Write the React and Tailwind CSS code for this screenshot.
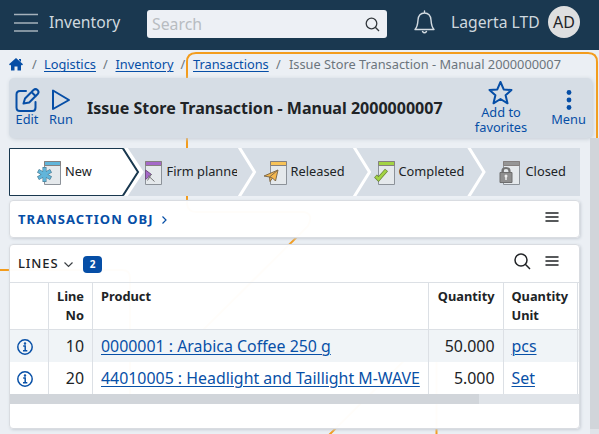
import React from 'react';

function PageBackdrop() {
  return (
    <svg className="pointer-events-none absolute inset-0" width="599" height="434" fill="none" stroke="#f39c1c" strokeWidth="2">
      <path d="M187 196V62Q187 53 196 53H588Q597 53 597 62V142" />
      <path d="M187 196V204Q188 212 196 212H304Q314 214 308 226L200 333" />
      <path d="M0 270H122Q130 270 130 278V400" />
      <path d="M326 438L427 338Q436 334 436.500 344V434" />
    </svg>
  );
}

function TopBar() {
  return (
    <header className="relative flex h-[50px] shrink-0 items-center bg-[#1a3850] text-[#cfd8df]">
      <svg className="mb-[5px] ml-[14px] shrink-0" width="24" height="20" stroke="#a5b1bb" strokeWidth="1.500">
        <path d="M0 1.500H24M0 10H24M0 18H24" />
      </svg>
      <span className="ml-[11px] w-[98px] pb-[6px] text-[15.700px] leading-6">Inventory</span>
      <div className="mb-[2px] flex h-7 w-[240px] items-center justify-between rounded-[3px] bg-[#edf0f5] pl-[5px] pr-[7px]">
        <span className="pt-px text-[15.800px] text-[#b8bcc1]">Search</span>
        <svg width="15" height="15" fill="none" stroke="#33383d" strokeWidth="1.300">
          <circle cx="6.500" cy="6.500" r="5.300" />
          <path d="M10.300 10.300L14 14" />
        </svg>
      </div>
      <svg className="mb-[6px] ml-[27px] shrink-0" width="21" height="24" fill="none" stroke="#d3dbe1" strokeWidth="1.400" strokeLinejoin="round" strokeLinecap="round">
        <path d="M10.500 1V3M1 19.500H20C17.500 17 17.300 14 17 10C16.600 5.500 14 3 10.500 3C7 3 4.400 5.500 4 10C3.700 14 3.500 17 1 19.500Z" />
        <path d="M8.500 21.500Q10.500 24 12.500 21.500" />
      </svg>
      <span className="ml-[16px] w-[97px] whitespace-nowrap pb-[6px] text-[15.700px] leading-6">Lagerta LTD</span>
      <span className="mb-[6px] flex size-8 items-center justify-center rounded-full bg-[#dedfe0] text-[16px] text-[#1f2428]">AD</span>
    </header>
  );
}

function Breadcrumb() {
  return (
    <nav className="relative flex h-7 shrink-0 items-center whitespace-nowrap pl-[9px] pt-[2px] text-[12.800px] text-[#6c757d]">
      <svg className="mb-px" width="14" height="13" fill="#064ea6">
        <path d="M7 0L14 6.300L12.900 7.500L12 6.700V12.500H8.500V8.500H5.500V12.500H2V6.700L1.100 7.500L0 6.300ZM10 1H12V4L10 2Z" />
      </svg>
      <span className="ml-[9px] w-[12px]">/</span>
      <a className="w-[51px] text-[#064ea6] underline decoration-1 underline-offset-2">Logistics</a>
      <span className="ml-[8px] w-[12.500px]">/</span>
      <a className="w-[57px] text-[#064ea6] underline decoration-1 underline-offset-2">Inventory</a>
      <span className="ml-[8px] w-[12.500px]">/</span>
      <a className="w-[76px] text-[#064ea6] underline decoration-1 underline-offset-2">Transactions</a>
      <span className="ml-[7px] w-[13px]">/</span>
      <span>Issue Store Transaction - Manual 2000000007</span>
    </nav>
  );
}

function Toolbar() {
  return (
    <section className="relative ml-[9px] flex h-[60px] w-[583px] shrink-0 rounded-[5px] bg-[#d6dde5] text-[12.800px] leading-[15px] text-[#064ea6] shadow-[1px_1px_4px_#c5cdd5]">
      <div className="flex w-9 flex-col items-center pt-[10px]">
        <svg width="25" height="24" fill="none" stroke="#064ea6" strokeWidth="2" strokeLinejoin="round" strokeLinecap="round">
          <path d="M11 3H5Q1.500 3 1.500 6.500V19.500Q1.500 23 5 23H17.500Q20.500 23 20.500 19.500V14" />
          <path d="M8.500 15.500L10 10.500L18.500 2Q20.500 .3 22.500 2Q24.500 4 22.700 6L14.200 14.500ZM16.500 4L20.700 8.200" />
        </svg>
        <span>Edit</span>
      </div>
      <div className="flex w-[32px] flex-col items-center pt-[10px]">
        <svg width="20" height="24" fill="none" stroke="#064ea6" strokeWidth="2" strokeLinejoin="round">
          <path d="M2 2.500V21L18 12Z" />
        </svg>
        <span>Run</span>
      </div>
      <h1 className="ml-[10px] flex w-[372px] items-center whitespace-nowrap text-[16.050px] font-bold text-[#202326]">Issue Store Transaction - Manual 2000000007</h1>
      <div className="ml-[14px] flex w-[56px] flex-col items-center pt-[3px] text-center">
        <svg className="mr-[2px]" width="25" height="24" fill="none" stroke="#064ea6" strokeWidth="2" strokeLinejoin="round">
          <path d="M12.500 1L15.700 8.400L23.500 9L17.600 14.200L19.500 22.300L12.500 18L5.500 22.300L7.400 14.200L1.500 9L9.300 8.400Z" />
        </svg>
        <span>Add to<br />favorites</span>
      </div>
      <div className="ml-[20px] flex w-[39px] flex-col items-center pt-[12px]">
        <svg width="6" height="20" fill="#064ea6">
          <circle cx="3" cy="2.500" r="2.400" /><circle cx="3" cy="10" r="2.400" /><circle cx="3" cy="17.500" r="2.400" />
        </svg>
        <span className="pt-[2px]">Menu</span>
      </div>
    </section>
  );
}

function StatusIcon({ kind, color }) {
  return (
    <svg className="mt-[2px] shrink-0" width="24" height="24" fill="none" strokeWidth="1">
      <path d="M7.500 .5H23.500V23.500H7.500Z" fill="#e5e9ec" stroke="#8c9299" />
      <path d="M7.500 .5H23.500V4.500H7.500Z" fill={color} stroke="#85807f" />
      {kind === 'new' && (
        <g strokeLinecap="butt">
          <path d="M7.500 6V21M1 9.700L14 17.300M14 9.700L1 17.300" stroke="#4d7f96" strokeWidth="4" />
          <path d="M7.500 6.700V20.300M1.600 10L13.400 17M13.400 10L1.600 17" stroke="#61b5da" strokeWidth="2.800" />
        </g>
      )}
      {kind === 'firm' && (
        <g>
          <path d="M7.500 9L13.500 13.500L7.500 18.500Z" fill="#a568c8" stroke="#715080" />
          <path d="M13.500 13L9.500 19.500M10 14.500L16.500 20.500" stroke="#777" />
        </g>
      )}
      {kind === 'released' && (
        <g stroke="#806a4a" fill="#f5b84f" strokeLinejoin="round">
          <path d="M1 15L15 9L12.500 20L9.500 17L7 20.500L6.500 16Z" />
          <path d="M15 9L6.500 16L9.500 17" />
        </g>
      )}
      {kind === 'completed' && (
        <g>
          <path d="M4.500 15L7.500 18L15.500 9" stroke="#668036" strokeWidth="4" />
          <path d="M4.900 15.400L7.500 18L15.100 9.400" stroke="#a3d444" strokeWidth="2.600" />
        </g>
      )}
      {kind === 'closed' && (
        <g>
          <path d="M6.500 13V10Q6.500 7 10 7Q13.500 7 13.500 10V13" stroke="#747474" strokeWidth="2.200" />
          <path d="M4 11.500H16V21.500H4Z" fill="#8f8f8f" stroke="#6e6e6e" />
          <circle cx="10" cy="15" r="1.500" fill="#eee" /><path d="M10 15V19" stroke="#eee" strokeWidth="1.500" />
        </g>
      )}
    </svg>
  );
}

function StatusBar() {
  return (
    <section className="relative ml-[9px] mt-[10px] flex h-12 w-[571px] shrink-0 bg-[#d6dde5] text-[12.800px] text-[#202326]">
      <svg className="absolute inset-0" width="571" height="48" fill="none">
        <path d="M114 0L130 24L114 48" stroke="white" strokeWidth="8" />
        <path d="M.5 .5H114L129 24L114 47.500H.5Z" fill="white" stroke="#19384f" />
        <path d="M114 .5L129 24L114 47.500" stroke="#19384f" strokeWidth="2" />
        <path d="M230 -1L245.500 24L230 49M345 -1L360.500 24L345 49M459.500 -1L475 24L459.500 49" stroke="white" strokeWidth="3" />
      </svg>
      <div className="relative flex w-[115px] items-center pl-[28px]"><StatusIcon kind="new" color="#61b5da" /><span className="ml-[4px]">New</span></div>
      <div className="relative flex w-[115px] items-center overflow-hidden pl-[21px]"><div className="flex w-[17px] justify-end overflow-hidden"><StatusIcon kind="firm" color="#a568c8" /></div><span className="ml-[4.500px] w-[70.500px] shrink-0 overflow-hidden whitespace-nowrap">Firm planned</span></div>
      <div className="relative flex w-[115px] items-center pl-[24px]"><StatusIcon kind="released" color="#f8c358" /><span className="ml-[3.500px]">Released</span></div>
      <div className="relative flex w-[115px] items-center pl-[17px]"><StatusIcon kind="completed" color="#a3d444" /><span className="ml-[3.500px]">Completed</span></div>
      <div className="relative flex flex-1 items-center pl-[27px]"><StatusIcon kind="closed" color="#969696" /><span className="ml-[5.500px]">Closed</span></div>
    </section>
  );
}

function MenuIcon() {
  return <svg width="14" height="10" stroke="#202326" strokeWidth="1.500" strokeLinecap="round"><path d="M1 1H13M1 5H13M1 9H13" /></svg>;
}

function InfoIcon() {
  return (
    <svg width="16" height="16" fill="none" stroke="#0850a7" strokeWidth="1.500">
      <circle cx="8" cy="8" r="7.200" /><path d="M6.200 7H8.200V11.500M6 11.700H10.300" /><circle cx="8" cy="4.400" r=".5" fill="#0850a7" />
    </svg>
  );
}

function Row({ no, product, qty, unit, shade }) {
  const cell = 'border-r border-[#dce0e5] h-8 flex items-center pt-[2px]';
  return (
    <div className={`grid h-8 grid-cols-[39px_44px_336px_75px_74px_1fr] text-[15.900px] ${shade ? 'bg-[#f0f4f7]' : ''}`}>
      <div className={`${cell} pl-[7px]`}><InfoIcon /></div>
      <div className={`${cell} justify-end pr-[8px]`}>{no}</div>
      <div className={`${cell} whitespace-nowrap pl-[8px]`}><a className="text-[#0850a7] underline decoration-1 underline-offset-2">{product}</a></div>
      <div className={`${cell} justify-end pr-[8.500px]`}>{qty}</div>
      <div className={`${cell} pl-[7.500px]`}><a className="text-[#0850a7] underline decoration-1 underline-offset-2">{unit}</a></div>
    </div>
  );
}

function Lines() {
  const head = 'border-r border-[#dce0e5] pt-[4px]';
  return (
    <section className="relative ml-[9px] mt-[6px] flex h-[185px] w-[571px] shrink-0 flex-col overflow-hidden rounded-[4px] border border-[#d9dce1] bg-white/98 shadow-[1px_1px_3px_#c9cfd6]">
      <div className="flex h-[37px] shrink-0 items-center pl-[8px] pr-[20px]">
        <span className="w-[46px] text-[13px] font-medium tracking-[.9px]">LINES</span>
        <svg className="mt-[2px]" width="9" height="6" fill="none" stroke="#3c4044" strokeWidth="1.200"><path d="M.5 .5L4.500 4.500L8.500 .5" /></svg>
        <span className="ml-[10px] mt-[2px] flex h-[17px] w-[19px] items-center justify-center rounded-[4px] bg-[#064ea6] text-[10px] font-bold text-white">2</span>
        <span className="flex-1" />
        <svg className="mr-[14px] mt-[-5px]" width="17" height="17" fill="none" stroke="#202326" strokeWidth="1.500"><circle cx="7" cy="7" r="6" /><path d="M11.300 11.300L16 16" /></svg>
        <div className="mt-[-5px]"><MenuIcon /></div>
      </div>
      <div className="grid h-[48px] shrink-0 grid-cols-[39px_44px_336px_75px_74px_1fr] border-y border-[#dce0e5] text-[12.800px] font-bold leading-[19px]">
        <div className={head} />
        <div className={`${head} pr-[8px] text-right`}>Line<br />No</div>
        <div className={`${head} pl-[8px]`}>Product</div>
        <div className={`${head} pr-[8.500px] text-right`}>Quantity</div>
        <div className={`${head} pl-[7.500px]`}>Quantity<br />Unit</div>
      </div>
      <Row no="10" product="0000001 : Arabica Coffee 250 g" qty="50.000" unit="pcs" shade />
      <Row no="20" product="44010005 : Headlight and Taillight M-WAVE" qty="5.000" unit="Set" />
      <div className="h-[10px] shrink-0 bg-[#e0e4e9]"><div className="h-full w-[469px] bg-[#d1d5da]" /></div>
    </section>
  );
}

export default function App() {
  return (
    <main className="relative flex h-[434px] w-[599px] flex-col overflow-hidden bg-[#ebeff4] font-['Noto_Sans',sans-serif] text-[#202326]">
      <PageBackdrop />
      <TopBar />
      <Breadcrumb />
      <Toolbar />
      <div className="relative flex h-[296px] shrink-0">
        <div className="flex w-[590px] flex-col">
          <StatusBar />
          <section className="relative ml-[9px] mt-[4px] flex h-[38px] w-[571px] shrink-0 items-center rounded-[4px] border border-[#d9dce1] bg-white/98 pl-[8px] pr-[20px] shadow-[1px_1px_3px_#c9cfd6]">
            <span className="w-[143.500px] whitespace-nowrap pt-px text-[13px] font-bold tracking-[1.050px] text-[#064ea6]">TRANSACTION OBJ</span>
            <svg className="mt-[2px]" width="5" height="8" fill="none" stroke="#064ea6" strokeWidth="1.200"><path d="M.5 .5L4 4L.5 7.500" /></svg>
            <div className="mb-[5px] ml-auto"><MenuIcon /></div>
          </section>
          <Lines />
        </div>
        <div className="w-[9px] bg-[#e0e4e9]"><div className="h-[291px] bg-[#d1d5da]" /></div>
      </div>
    </main>
  );
}
